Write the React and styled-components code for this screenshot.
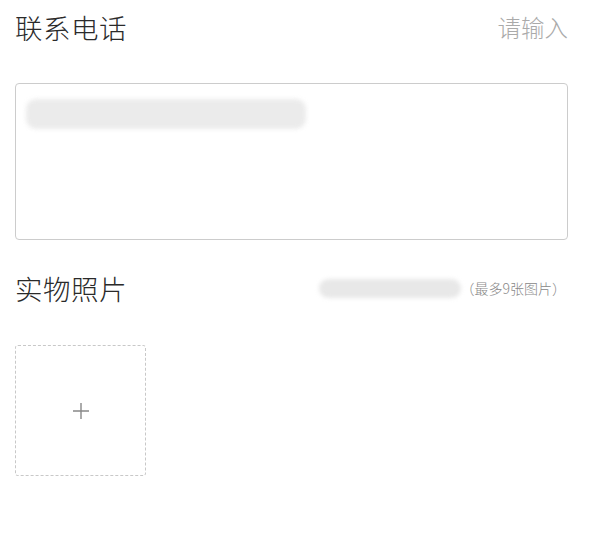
import React from "react";
import styled, { createGlobalStyle } from "styled-components";

const GlobalStyle = createGlobalStyle`
  body {
    margin: 0;
    background: #fff;
    font-family: "Noto Sans CJK SC", "Liberation Sans", sans-serif;
  }
`;

const Page = styled.div`
  width: 553px;
  padding: 0 27px 0 15px;
`;

const FieldRow = styled.div`
  display: flex;
  align-items: center;
  justify-content: space-between;
  height: ${(p) => p.h}px;
`;

const Label = styled.div`
  font-size: 27.5px;
  font-weight: 300;
  color: #2a2a2a;
  letter-spacing: 0.5px;
`;

const Placeholder = styled.input`
  border: none;
  outline: none;
  text-align: right;
  font-family: inherit;
  font-size: 23.5px;
  font-weight: 300;
  color: #aaa;
  width: 200px;
  padding: 0;
  &::placeholder { color: #aaa; }
`;

const TextBox = styled.div`
  border: 1px solid #ccc;
  border-radius: 4px;
  margin-top: 29px;
  padding: 15px 10px;
  box-sizing: border-box;
  height: 157px;
`;

const Smudge = styled.div`
  width: ${(p) => p.w}px;
  height: ${(p) => p.h}px;
  background: #e8e8e8;
  border-radius: 10px;
  filter: blur(2px);
  opacity: ${(p) => p.o || 1};
`;

const Hint = styled.div`
  display: flex;
  align-items: center;
  font-size: 14px;
  color: #888;
  font-weight: 300;
  margin-right: 2px;
`;

const UploadBox = styled.div`
  width: 131px;
  height: 131px;
  box-sizing: border-box;
  border: 1px dashed #c8c8c8;
  border-radius: 3px;
  margin-top: 9px;
  display: flex;
  align-items: center;
  justify-content: center;
`;

export default function App() {
  return (
    <>
      <GlobalStyle />
      <Page>
        <FieldRow h={54}>
          <Label>联系电话</Label>
          <Placeholder placeholder="请输入" />
        </FieldRow>
        <TextBox>
          <Smudge w={280} h={30} o={0.85} />
        </TextBox>
        <FieldRow h={96}>
          <Label>实物照片</Label>
          <Hint>
            <Smudge w={142} h={19} />
            <span>（最多9张图片）</span>
          </Hint>
        </FieldRow>
        <UploadBox>
          <svg width="18" height="18" viewBox="0 0 18 18">
            <path d="M9 1v16M1 9h16" stroke="#888" strokeWidth="1.4" fill="none" />
          </svg>
        </UploadBox>
      </Page>
    </>
  );
}
